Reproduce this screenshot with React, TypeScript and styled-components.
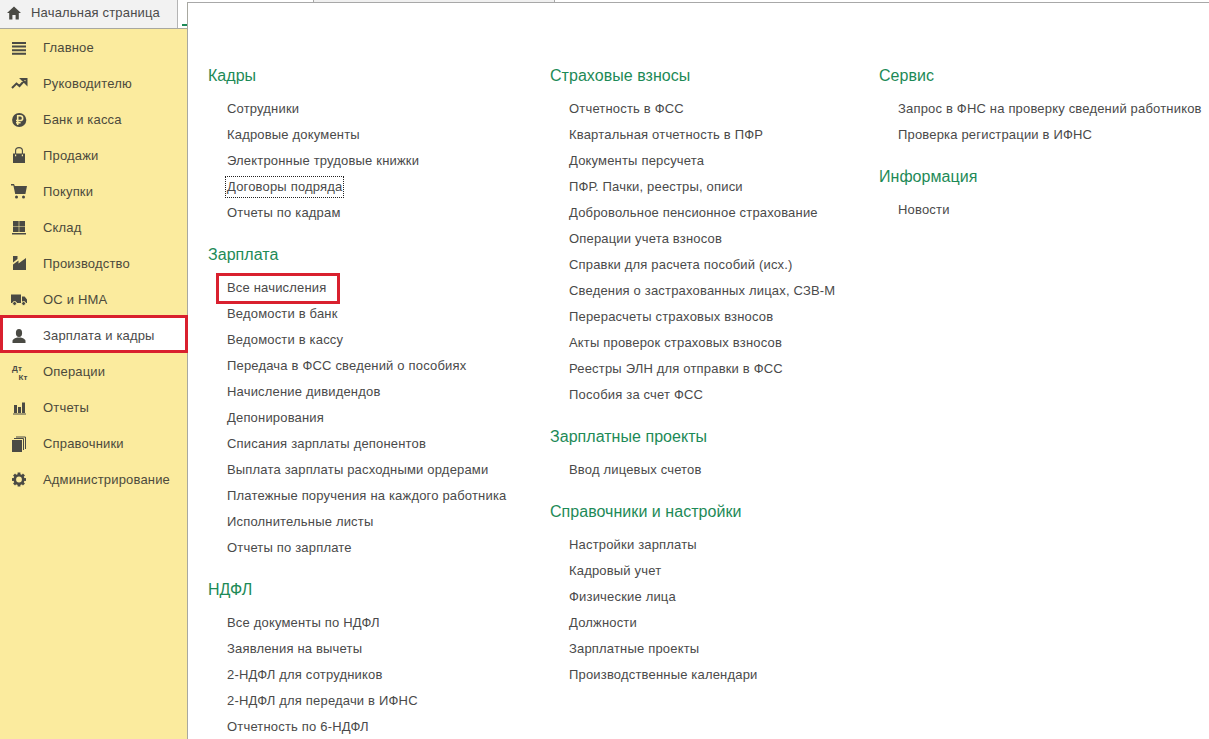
import React from "react";
import styled, { createGlobalStyle } from "styled-components";

const GlobalStyle = createGlobalStyle`
  html, body {
    margin: 0;
    height: 100%;
    overflow: hidden;
    background: #fff;
    font-family: "Liberation Sans", Arial, sans-serif;
  }
`;

const Page = styled.div`
  display: flex;
  width: 1209px;
  height: 739px;
  overflow: hidden;
`;

const LeftColumn = styled.div`
  position: relative;
  z-index: 1;
  display: flex;
  flex-direction: column;
  width: 187px;
  flex: none;
`;

const HomeBar = styled.div`
  display: flex;
  height: 29px;
  flex: none;
  border-bottom: 1px solid #a8a8a0;
  box-sizing: border-box;
`;

const HomeTab = styled.div`
  display: flex;
  align-items: center;
  gap: 9px;
  width: 178px;
  padding: 0 0 3px 6px;
  box-sizing: border-box;
  background: #f2f2f2;
  border-right: 1px solid #b4b4b4;
  font-size: 13px;
  letter-spacing: 0.18px;
  color: #4a4a4a;
`;

const TabRest = styled.div`
  position: relative;
  flex: 1;
`;

const GreenMark = styled.span`
  position: absolute;
  left: 4px;
  right: 0;
  bottom: 2px;
  height: 2px;
  background: #1d8a57;
`;

const Sidebar = styled.nav`
  flex: 1;
  background: #fbeb9e;
`;

const NavRow = styled.div<{ $active?: boolean }>`
  position: relative;
  display: flex;
  align-items: center;
  gap: 16px;
  height: 36px;
  padding-left: 11px;
  font-size: 13px;
  letter-spacing: 0.18px;
  background: ${(p) => (p.$active ? "#fff" : "transparent")};
  color: ${(p) => (p.$active ? "#4a4a4a" : "#4c4a3c")};

  ${(p) =>
    p.$active &&
    `
    &::after {
      content: "";
      position: absolute;
      left: 0;
      right: -1px;
      top: -2px;
      bottom: 0;
      border: 3px solid #d9202e;
    }
  `}
`;

const IconBox = styled.svg`
  display: block;
  width: 16px;
  height: 16px;
  flex: none;
  fill: #4a4a44;
  stroke: none;
  overflow: visible;
`;

const Main = styled.main`
  flex: 1;
  display: flex;
  flex-direction: column;
  min-width: 0;
`;

const TabStrip = styled.div`
  display: grid;
  grid-template-columns: 126px 242px 1fr;
  height: 2px;
  flex: none;
`;

const TabEdge = styled.div<{ $filled?: boolean }>`
  background: ${(p) => (p.$filled ? "#f0f0f0" : "#fff")};
  border-left: ${(p) => (p.$filled ? "1px solid #a8a8a8" : "none")};
  border-right: ${(p) => (p.$filled ? "1px solid #a8a8a8" : "none")};
`;

const Content = styled.div`
  flex: 1;
  display: grid;
  grid-template-columns: 342px 329px 1fr;
  align-content: start;
  padding: 60px 0 0 20px;
  border-top: 1px solid #a8a8a8;
  border-left: 1px solid #a8a8a0;
  background: #fff;
  min-height: 0;
`;

const Column = styled.div`
  display: flex;
  flex-direction: column;
  gap: 16px;
`;

const Section = styled.section`
  display: flex;
  flex-direction: column;
`;

const Heading = styled.h2`
  margin: 0 0 7px;
  height: 26px;
  line-height: 26px;
  font-size: 16px;
  font-weight: 400;
  letter-spacing: 0.04px;
  color: #1d8a57;
`;

const LinkList = styled.ul`
  list-style: none;
  margin: 0;
  padding: 0 0 0 19px;
`;

const LinkItem = styled.li`
  height: 26px;
  line-height: 26px;
  font-size: 13px;
  letter-spacing: 0.18px;
  color: #4a4a4a;
  white-space: nowrap;
`;

const LinkText = styled.span<{ $focus?: boolean; $marked?: boolean }>`
  position: relative;
  display: inline-block;

  ${(p) =>
    p.$focus &&
    `
    line-height: 20px;
    padding: 0 1px;
    margin-left: -1px;
    outline: 1px dotted #222;
  `}

  ${(p) =>
    p.$marked &&
    `
    &::after {
      content: "";
      position: absolute;
      left: -11px;
      right: -13px;
      top: -2px;
      bottom: -3px;
      border: 3px solid #d9202e;
    }
  `}
`;

const HomeIcon = () => (
  <IconBox viewBox="0 0 16 16">
    <path d="M8 1.5 15 8h-2.2v6.5H9.6V10H6.4v4.5H3.2V8H1z" />
  </IconBox>
);

const gearTeeth = [0, 45, 90, 135, 180, 225, 270, 315];

const navIcons: Record<string, React.ReactNode> = {
  menu: <path d="M1 3h14v2H1zM1 6.6h14v2H1zM1 10.2h14v2H1zM1 13.8h14v2H1z" />,
  trend: (
    <path
      d="M1 13 5.5 8.5 8.5 11l4-4.5M10.5 4H15.5V9z"
      strokeWidth="2"
      style={{ stroke: "#4a4a44" }}
      fill="none"
    />
  ),
  ruble: (
    <>
      <circle cx="8.2" cy="9" r="7.1" />
      <path
        d="M6.7 14V4.8h2.6a2.3 2.3 0 0 1 0 4.7H5M5 11.7h4.6"
        fill="none"
        strokeWidth="1.6"
        style={{ stroke: "#fbeb9e" }}
      />
    </>
  ),
  bag: (
    <>
      <path d="M2 6.5h12V16H2z" />
      <path
        d="M4.6 8V3.6a3.4 3 0 0 1 6.8 0V8"
        fill="none"
        strokeWidth="1.1"
        style={{ stroke: "#4a4a44" }}
      />
      <path d="M4 7.6h1.2v1.6H4zM10.8 7.6H12v1.6h-1.2z" fill="#fbeb9e" />
    </>
  ),
  cart: (
    <>
      <path d="M0 1h3l.8 2H16l-1.6 8H4.2L2.4 2.6H0z" />
      <circle cx="5.5" cy="14" r="1.5" />
      <circle cx="12.5" cy="14" r="1.5" />
    </>
  ),
  store: <path d="M2 2h5.7v5.2H2zM8.3 2H14v5.2H8.3zM2 7.8h5.7V13H2zM8.3 7.8H14V13H8.3zM1 14h14v1.6H1z" />,
  factory: <path d="M2 1h4.5v3L2 7.5zM2 9.5 7.5 5.5v3L15 3v12H2z" />,
  truck: (
    <>
      <path d="M0 3.5h10v8.5H0zM11 5.5h2.6L16 8.5V12h-5z" />
      <circle cx="3.6" cy="12.5" r="2" stroke="#fbeb9e" />
      <circle cx="12.6" cy="12.5" r="2" stroke="#fbeb9e" />
    </>
  ),
  person: (
    <>
      <ellipse cx="8" cy="6" rx="3.1" ry="3.9" />
      <path d="M1.5 16v-2c0-2 3-3 4.7-3.5h3.6c1.7.5 4.7 1.5 4.7 3.5v2z" />
    </>
  ),
  debitCredit: (
    <>
      <text x="1" y="8" fontSize="8" fontWeight="700" fontFamily="Liberation Sans, sans-serif">
        Дт
      </text>
      <text x="7.5" y="16.5" fontSize="8" fontWeight="700" fontFamily="Liberation Sans, sans-serif">
        Кт
      </text>
    </>
  ),
  bars: <path d="M3 6h3v8H3zM7 8h3v6H7zM11 3.5h3V14h-3zM2 14.4h13v1H2z" />,
  books: (
    <>
      <path d="M1 5h10v12H1z" />
      <path d="M3 3.5h9.5V15M5 2h9.5v12" fill="none" strokeWidth="1" style={{ stroke: "#4a4a44" }} />
    </>
  ),
  gear: (
    <>
      <circle cx="8" cy="8.5" r="4.2" fill="none" strokeWidth="2.6" style={{ stroke: "#4a4a44" }} />
      {gearTeeth.map((angle) => (
        <rect key={angle} x="6.6" y="1.5" width="2.8" height="3" transform={`rotate(${angle} 8 8.5)`} />
      ))}
    </>
  ),
};

const navItems = [
  { icon: "menu", label: "Главное" },
  { icon: "trend", label: "Руководителю" },
  { icon: "ruble", label: "Банк и касса" },
  { icon: "bag", label: "Продажи" },
  { icon: "cart", label: "Покупки" },
  { icon: "store", label: "Склад" },
  { icon: "factory", label: "Производство" },
  { icon: "truck", label: "ОС и НМА" },
  { icon: "person", label: "Зарплата и кадры", active: true },
  { icon: "debitCredit", label: "Операции" },
  { icon: "bars", label: "Отчеты" },
  { icon: "books", label: "Справочники" },
  { icon: "gear", label: "Администрирование" },
];

type SectionData = { title: string; links: string[] };

const columns: SectionData[][] = [
  [
    {
      title: "Кадры",
      links: ["Сотрудники", "Кадровые документы", "Электронные трудовые книжки", "Договоры подряда", "Отчеты по кадрам"],
    },
    {
      title: "Зарплата",
      links: [
        "Все начисления",
        "Ведомости в банк",
        "Ведомости в кассу",
        "Передача в ФСС сведений о пособиях",
        "Начисление дивидендов",
        "Депонирования",
        "Списания зарплаты депонентов",
        "Выплата зарплаты расходными ордерами",
        "Платежные поручения на каждого работника",
        "Исполнительные листы",
        "Отчеты по зарплате",
      ],
    },
    {
      title: "НДФЛ",
      links: [
        "Все документы по НДФЛ",
        "Заявления на вычеты",
        "2-НДФЛ для сотрудников",
        "2-НДФЛ для передачи в ИФНС",
        "Отчетность по 6-НДФЛ",
      ],
    },
  ],
  [
    {
      title: "Страховые взносы",
      links: [
        "Отчетность в ФСС",
        "Квартальная отчетность в ПФР",
        "Документы персучета",
        "ПФР. Пачки, реестры, описи",
        "Добровольное пенсионное страхование",
        "Операции учета взносов",
        "Справки для расчета пособий (исх.)",
        "Сведения о застрахованных лицах, СЗВ-М",
        "Перерасчеты страховых взносов",
        "Акты проверок страховых взносов",
        "Реестры ЭЛН для отправки в ФСС",
        "Пособия за счет ФСС",
      ],
    },
    { title: "Зарплатные проекты", links: ["Ввод лицевых счетов"] },
    {
      title: "Справочники и настройки",
      links: [
        "Настройки зарплаты",
        "Кадровый учет",
        "Физические лица",
        "Должности",
        "Зарплатные проекты",
        "Производственные календари",
      ],
    },
  ],
  [
    {
      title: "Сервис",
      links: ["Запрос в ФНС на проверку сведений работников", "Проверка регистрации в ИФНС"],
    },
    { title: "Информация", links: ["Новости"] },
  ],
];

const App: React.FC = () => {
  return (
    <Page>
      <GlobalStyle />
      <LeftColumn>
        <HomeBar>
          <HomeTab>
            <HomeIcon />
            Начальная страница
          </HomeTab>
          <TabRest>
            <GreenMark />
          </TabRest>
        </HomeBar>
        <Sidebar>
          {navItems.map((item) => (
            <NavRow key={item.label} $active={item.active}>
              <IconBox viewBox="0 0 16 16">{navIcons[item.icon]}</IconBox>
              {item.label}
            </NavRow>
          ))}
        </Sidebar>
      </LeftColumn>
      <Main>
        <TabStrip>
          <TabEdge />
          <TabEdge $filled />
          <TabEdge />
        </TabStrip>
        <Content>
          {columns.map((sections) => (
            <Column key={sections[0].title}>
              {sections.map((section) => (
                <Section key={section.title}>
                  <Heading>{section.title}</Heading>
                  <LinkList>
                    {section.links.map((link) => (
                      <LinkItem key={link}>
                        <LinkText $focus={link === "Договоры подряда"} $marked={link === "Все начисления"}>
                          {link}
                        </LinkText>
                      </LinkItem>
                    ))}
                  </LinkList>
                </Section>
              ))}
            </Column>
          ))}
        </Content>
      </Main>
    </Page>
  );
};

export default App;
